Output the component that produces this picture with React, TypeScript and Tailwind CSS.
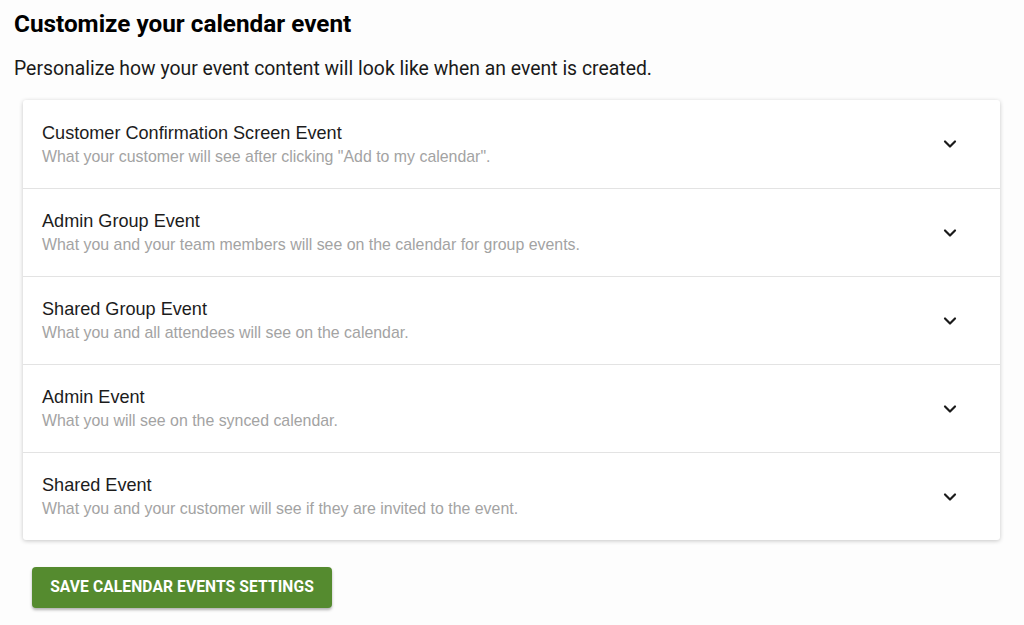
import { ChevronDown } from "lucide-react";

const events = [
  {
    title: "Customer Confirmation Screen Event",
    description: 'What your customer will see after clicking "Add to my calendar".',
  },
  {
    title: "Admin Group Event",
    description: "What you and your team members will see on the calendar for group events.",
  },
  {
    title: "Shared Group Event",
    description: "What you and all attendees will see on the calendar.",
  },
  {
    title: "Admin Event",
    description: "What you will see on the synced calendar.",
  },
  {
    title: "Shared Event",
    description: "What you and your customer will see if they are invited to the event.",
  },
];

export default function App() {
  return (
    <div className="min-h-[625px] bg-[#fdfdfd] px-[14px] pt-[10px] font-['Roboto',sans-serif]">
      <h1 className="text-[24.3px] font-bold leading-[28px] text-black">
        Customize your calendar event
      </h1>
      <p className="mt-[19px] text-[19.4px] leading-[24px] text-[#1a1a1a]">
        Personalize how your event content will look like when an event is created.
      </p>

      <div className="ml-[9px] mr-[10px] mt-[19px] rounded-[3px] bg-white shadow-[0_1px_4px_rgba(0,0,0,0.22)]">
        {events.map((event, i) => (
          <button
            key={event.title}
            className={`flex h-[88px] w-full items-center justify-between pl-[19px] pr-[40px] text-left font-['Liberation_Sans',Arial,sans-serif] ${
              i > 0 ? "border-t border-[#e3e3e3]" : ""
            }`}
          >
            <div>
              <div className="text-[18.1px] leading-[22px] text-[#1c1c1c]">{event.title}</div>
              <div className="mt-[3px] text-[15.9px] leading-[20px] text-[#a3a3a3]">
                {event.description}
              </div>
            </div>
            <ChevronDown size={20} strokeWidth={2.6} className="text-[#1a1a1a]" />
          </button>
        ))}
      </div>

      <button className="ml-[18px] mt-[27px] h-[41px] w-[300px] rounded-[4px] bg-[#558b2f] text-[15.6px] font-bold tracking-[0.1px] text-white shadow-[0_2px_3px_rgba(0,0,0,0.3)]">
        SAVE CALENDAR EVENTS SETTINGS
      </button>
    </div>
  );
}
